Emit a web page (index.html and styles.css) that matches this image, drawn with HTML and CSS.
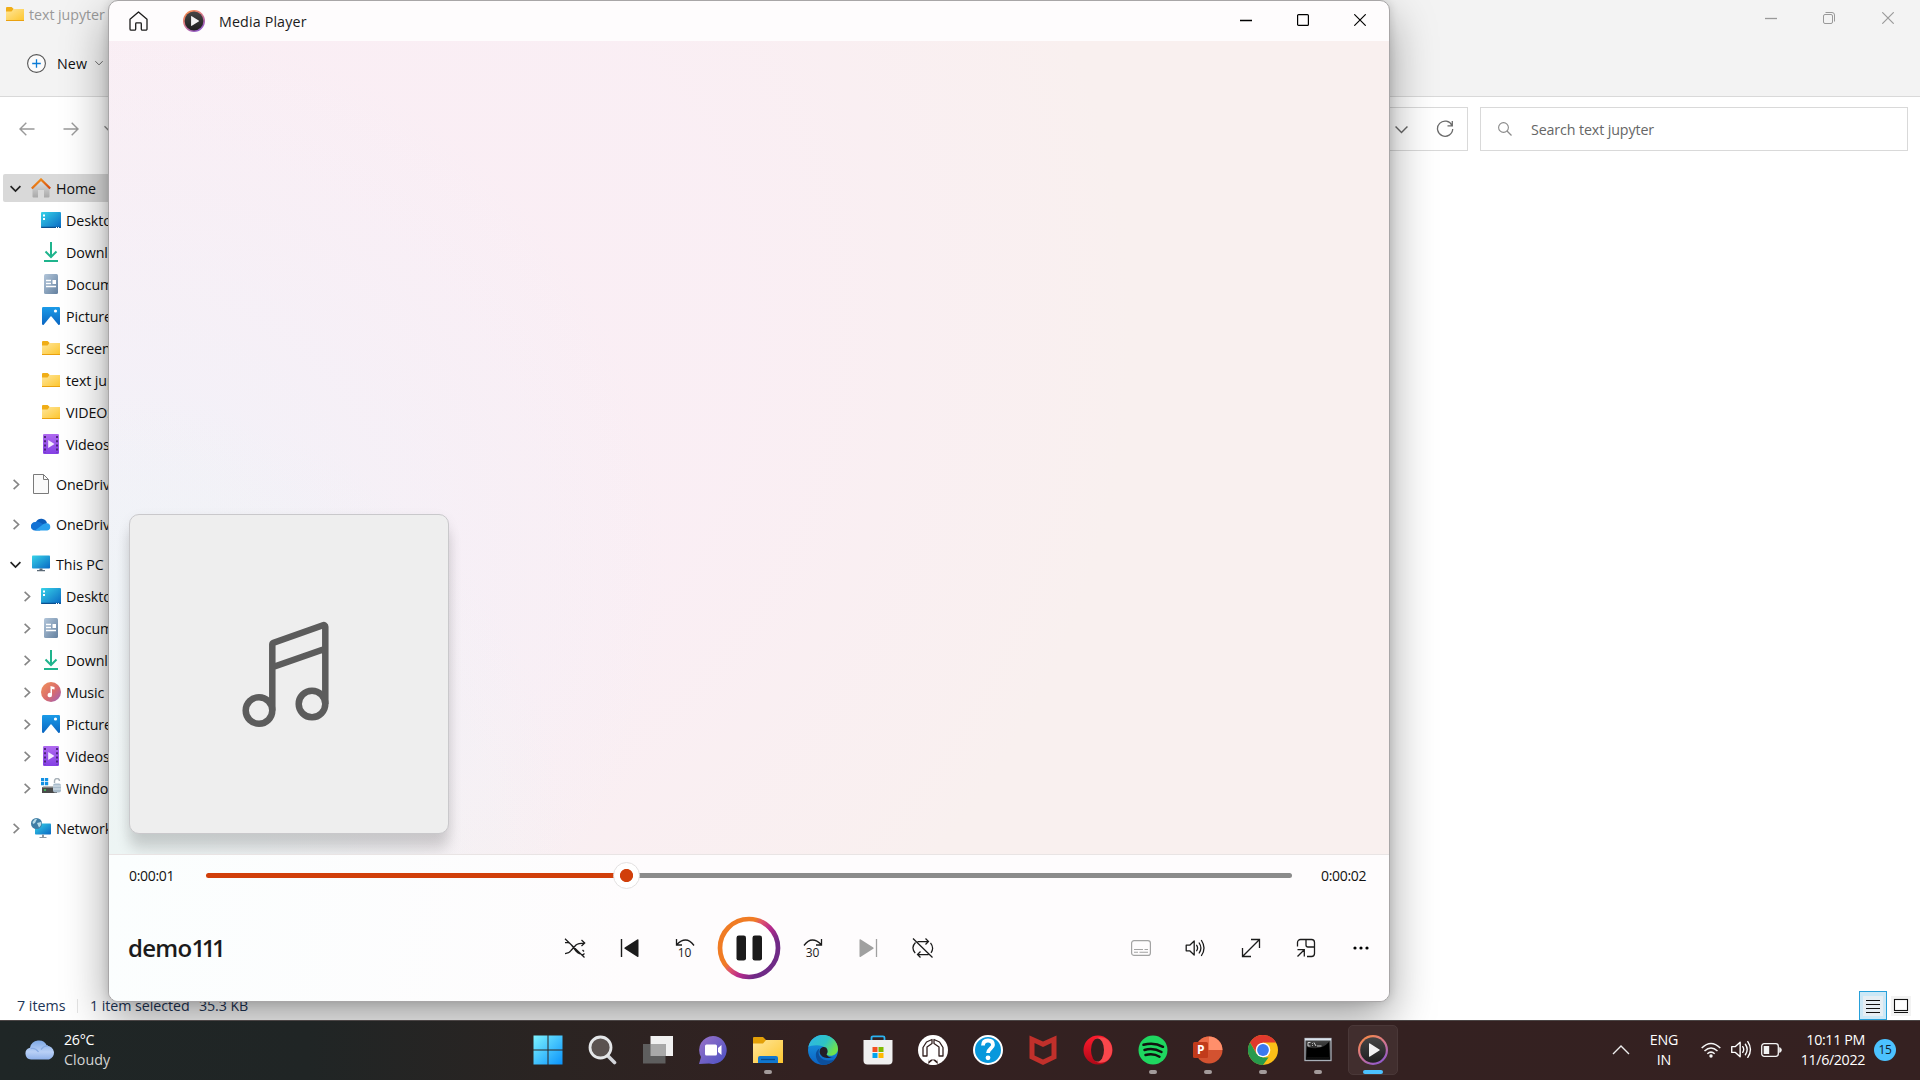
FILE: index.html
```html
<!DOCTYPE html>
<html lang="en">
<head>
<meta charset="utf-8">
<title>Media Player</title>
<link rel="stylesheet" href="styles.css">
</head>
<body>
<svg class="defs" width="0" height="0" aria-hidden="true">
  <defs>
    <linearGradient id="gFolder" x1="0" y1="0" x2="1" y2="1"><stop offset="0" stop-color="#ffe69a"/><stop offset="1" stop-color="#fdc62f"/></linearGradient>
    <linearGradient id="gBlue" x1="0" y1="0" x2="1" y2="1"><stop offset="0" stop-color="#37d3e8"/><stop offset="1" stop-color="#0a68c4"/></linearGradient>
    <linearGradient id="gPic" x1="0" y1="0" x2="0" y2="1"><stop offset="0" stop-color="#1b9be8"/><stop offset="1" stop-color="#0a66c2"/></linearGradient>
    <linearGradient id="gDoc" x1="0" y1="0" x2="1" y2="1"><stop offset="0" stop-color="#b3c6da"/><stop offset="1" stop-color="#63809f"/></linearGradient>
    <linearGradient id="gVideo" x1="0" y1="0" x2="0" y2="1"><stop offset="0" stop-color="#b06af0"/><stop offset="1" stop-color="#8440e4"/></linearGradient>
    <linearGradient id="gMusic" x1="0" y1="0" x2="1" y2="1"><stop offset="0" stop-color="#f2935a"/><stop offset=".55" stop-color="#d96c6c"/><stop offset="1" stop-color="#9b5fc0"/></linearGradient>
    <linearGradient id="gHouse" x1="0" y1="0" x2="0" y2="1"><stop offset="0" stop-color="#e4e4e4"/><stop offset="1" stop-color="#a9a9a9"/></linearGradient>
    <linearGradient id="gRoof" x1="0" y1="0" x2="1" y2="1"><stop offset="0" stop-color="#f59a1c"/><stop offset="1" stop-color="#d3470f"/></linearGradient>
    <linearGradient id="gRing" x1=".1" y1="0" x2=".7" y2="1"><stop offset="0" stop-color="#f98b3c"/><stop offset=".45" stop-color="#dc7a86"/><stop offset="1" stop-color="#8e58cf"/></linearGradient>
    <linearGradient id="gDark" x1="0" y1="0" x2="0" y2="1"><stop offset="0" stop-color="#454545"/><stop offset="1" stop-color="#1f1f1f"/></linearGradient>
    <linearGradient id="gPlayRing" x1=".12" y1=".25" x2=".88" y2=".75"><stop offset=".3" stop-color="#f07c24"/><stop offset=".42" stop-color="#e0566a"/><stop offset=".62" stop-color="#b92a8c"/><stop offset=".88" stop-color="#6f2a86"/></linearGradient>
    <linearGradient id="gWin" x1="0" y1="0" x2="1" y2="1"><stop offset="0" stop-color="#7df3ff"/><stop offset="1" stop-color="#0a93fb"/></linearGradient>
    <linearGradient id="gChat" x1="0" y1="0" x2="1" y2="1"><stop offset="0" stop-color="#9a73c8"/><stop offset="1" stop-color="#4a50c4"/></linearGradient>
    <linearGradient id="gEdge" x1="0" y1="0" x2="1" y2=".5"><stop offset="0" stop-color="#2fb4ea"/><stop offset=".6" stop-color="#2ec4c4"/><stop offset="1" stop-color="#6ee24e"/></linearGradient>
    <linearGradient id="gEdge2" x1="0" y1="0" x2="0" y2="1"><stop offset="0" stop-color="#1b9de2"/><stop offset="1" stop-color="#0b62c4"/></linearGradient>
    <linearGradient id="gOpera" x1="0" y1="0" x2="0" y2="1"><stop offset="0" stop-color="#ff1b2d"/><stop offset="1" stop-color="#b00817"/></linearGradient>
    <linearGradient id="gCloud" x1="0" y1="0" x2="0" y2="1"><stop offset="0" stop-color="#7ea9e6"/><stop offset=".6" stop-color="#b9d0f6"/><stop offset="1" stop-color="#8fb1ea"/></linearGradient>
    <linearGradient id="gCmd" x1="0" y1="0" x2="0" y2="1"><stop offset="0" stop-color="#4a4a4a"/><stop offset="1" stop-color="#050505"/></linearGradient>

    <symbol id="folder" viewBox="0 0 20 20"><path d="M1 5.2V4a1 1 0 0 1 1-1h4.600l1.900 1.800V8H1z" fill="#f0ad16"/><path d="M1 7.500h5.500L8.500 5H19v11.500H1z" fill="url(#gFolder)"/><path d="M1 16h18v1H1z" fill="#eaa10f"/></symbol>
    <symbol id="desktop" viewBox="0 0 20 20"><rect y="2" width="20" height="16" rx="1" fill="url(#gBlue)"/><path d="M0 16.700h20V17a1 1 0 0 1-1 1H1a1 1 0 0 1-1-1z" fill="#0b4f8f"/><path d="M2 4.500h2v2H2zM2 8h2v2H2zM15 17h1v1h-1zM17 17h1v1h-1z" fill="#fff"/></symbol>
    <symbol id="downloads" viewBox="0 0 20 20"><path d="M10 0v15M4.500 9.500 10 15l5.500-5.500M3 19h14" fill="none" stroke="#1fb48d" stroke-width="2"/></symbol>
    <symbol id="documents" viewBox="0 0 20 20"><rect x="3" width="14" height="20" rx="1.500" fill="url(#gDoc)"/><path d="M5 6.500h5M5 9.500h5M5 12.500h10" stroke="#fff" stroke-width="1.400"/><path d="M11.500 6h3.500v4h-3.500z" fill="#fff"/></symbol>
    <symbol id="pictures" viewBox="0 0 20 20"><rect x="1" y="1" width="18" height="18" rx="1.200" fill="url(#gPic)"/><path d="m2.500 19 7-8.500q.5-.5 1 0l7 8.500z" fill="#fff"/><circle cx="14.500" cy="5" r="1.600" fill="#fff"/></symbol>
    <symbol id="videos" viewBox="0 0 20 20"><rect x="2" width="16" height="20" rx="1.300" fill="url(#gVideo)"/><path d="M4 2v17M16 2v17" stroke="#43206f" stroke-width="1.800" stroke-dasharray="2 2.200"/><path d="M7.200 6v8l6.300-4z" fill="#f3eaff"/></symbol>
    <symbol id="music" viewBox="0 0 20 20"><circle cx="10" cy="10" r="10" fill="url(#gMusic)"/><path d="M9.500 4 13.500 5v2.500l-2.500-.6v6a2.200 2.200 0 1 1-1.500-2z" fill="#fff"/></symbol>
    <symbol id="page" viewBox="0 0 20 20"><path d="M2.500.5h10l5 5v14h-15z" fill="#fafafa" stroke="#7a7a7a"/><path d="M12.500.5v5h5" fill="none" stroke="#7a7a7a"/></symbol>
    <symbol id="onedrive" viewBox="0 0 20 20"><path d="M5 8a6 6 0 0 1 11 1l-5 5-8-3z" fill="#0b5dbb"/><path d="M4.200 8C6.500 6.500 9 8 13 11l-4 5.500H4A4.200 4.200 0 0 1 4.200 8z" fill="#1272d4"/><path d="M4 16.500 12.500 10A5 5 0 0 1 16 9.200a3.700 3.700 0 0 1 .3 7.300z" fill="#29a0ee"/></symbol>
    <symbol id="pc" viewBox="0 0 20 20"><rect x="1" y="1.500" width="18" height="13" rx=".8" fill="url(#gBlue)"/><path d="M8.500 14.500h3V16h-3zM6 16h8v1.200H6z" fill="#5d6b78"/></symbol>
    <symbol id="drive" viewBox="0 0 20 20"><path d="M0 0h3.200v3.200H0zM4 0h3.200v3.200H4zM0 4h3.200v3.200H0zM4 4h3.200v3.200H4z" fill="#1391e4"/><path d="M1 9h15v6H1z" fill="#4a4a4a"/><path d="M2.500 8h12L16 9.500H1z" fill="#bcbcbc"/><circle cx="4" cy="12" r="1" fill="#41d35c"/><path d="M13.500 5V3a2.500 2.500 0 0 1 5 0" fill="none" stroke="#a8b1b8" stroke-width="1.400"/><rect x="12" y="5.500" width="8" height="9" rx="2" fill="#a9bccb"/><path d="M12 8h8M12 11h8" stroke="#dce5ec"/></symbol>
    <symbol id="network" viewBox="0 0 20 20"><rect x="4" y="5.500" width="16" height="11" rx=".8" fill="url(#gBlue)"/><path d="M11 16.500h2V19h-2zM8.500 19h7v1h-7z" fill="#8c98a3"/><circle cx="5.500" cy="5.500" r="5.500" fill="#3f7da5"/><path d="M1.500 4Q4 0 6 1L4 5 2 6zM6 5l4-1q1 3-2 5.500z" fill="#b8dbe8"/></symbol>
    <symbol id="home" viewBox="0 0 20 20"><path d="M1.500 8 10 1l8.500 7v10.500a1 1 0 0 1-1 1H13V12H7v7.500H2.500a1 1 0 0 1-1-1z" fill="url(#gHouse)"/><path d="m.8 10.500 9.200-9 9.200 9" fill="none" stroke="url(#gRoof)" stroke-width="2.300"/></symbol>
    <symbol id="right" viewBox="0 0 10 10"><path d="M3.300.8 7.800 5 3.300 9.200" fill="none" stroke="#858585" stroke-width="1.500"/></symbol>
    <symbol id="down" viewBox="0 0 10 10"><path d="M.5 2.800 5 7.300l4.500-4.500" fill="none" stroke="#222" stroke-width="1.600"/></symbol>
    <symbol id="thin-down" viewBox="0 0 12 12"><path d="m.5 3.300 5.500 5.500 5.500-5.500" fill="none" stroke="currentColor" stroke-width="1.300"/></symbol>
    <symbol id="min" viewBox="0 0 12 12"><path d="M0 6.500h12" stroke="currentColor" stroke-width="1.300"/></symbol>
    <symbol id="max" viewBox="0 0 12 12"><rect x=".6" y=".6" width="10.800" height="10.800" rx="1" fill="none" stroke="currentColor" stroke-width="1.200"/></symbol>
    <symbol id="restore" viewBox="0 0 12 12"><rect x=".5" y="2.500" width="9" height="9" rx="1.500" fill="none" stroke="currentColor"/><path d="M2.500.5H9A2.500 2.500 0 0 1 11.500 3v6.500" fill="none" stroke="currentColor"/></symbol>
    <symbol id="close" viewBox="0 0 12 12"><path d="m.3.300 11.400 11.400M11.700.300.300 11.700" stroke="currentColor" stroke-width="1.150"/></symbol>
    <symbol id="player" viewBox="0 0 30 30"><circle cx="15" cy="15" r="15" fill="url(#gRing)"/><circle cx="15" cy="15" r="12.800" fill="url(#gDark)"/><path d="M11 8.800v12.400a.6.600 0 0 0 1 .4l9.400-6a.7.700 0 0 0 0-1.200L12 8.400a.6.600 0 0 0-1 .4z" fill="#f2f2f2"/></symbol>
    <symbol id="speaker" viewBox="0 0 20 18"><path d="M.7 6.200h3.500L8.700 2v14l-4.500-4.200H.7zM11.200 6.300q1.800 2.700 0 5.400M13.700 4q3.400 5 0 10M16 1.500q5 7.500 0 15" fill="none" stroke="currentColor" stroke-width="1.300" stroke-linejoin="round" stroke-linecap="round"/></symbol>
  </defs>
</svg>

<div class="screen">
  <section class="explorer">
    <header class="ex-top">
      <div class="ex-title">
        <svg class="i20"><use href="#folder"/></svg>
        <span class="ex-name">text jupyter</span>
        <div class="ex-buttons">
          <span><svg class="i12"><use href="#min"/></svg></span>
          <span><svg class="i12"><use href="#restore"/></svg></span>
          <span><svg class="i12"><use href="#close"/></svg></span>
        </div>
      </div>
      <div class="ex-commands">
        <svg width="19" height="19" viewBox="0 0 19 19"><circle cx="9.500" cy="9.500" r="8.900" fill="#fbfbfb" stroke="#555" stroke-width="1.100"/><path d="M9.500 5.200v8.600M5.200 9.500h8.600" stroke="#0a7bd6" stroke-width="1.300"/></svg>
        <span class="new">New</span>
        <svg class="new-chev"><use href="#thin-down"/></svg>
      </div>
    </header>
    <div class="ex-nav">
      <div class="history">
        <svg width="16" height="14" viewBox="0 0 16 14"><path d="M15.500 7H1M7.300.7 1 7l6.300 6.300" fill="none" stroke="#999" stroke-width="1.400"/></svg>
        <svg width="16" height="14" viewBox="0 0 16 14"><path d="M.5 7H15M8.700.7 15 7l-6.300 6.300" fill="none" stroke="#999" stroke-width="1.400"/></svg>
        <svg class="i12 recent"><use href="#thin-down"/></svg>
      </div>
      <div class="address">
        <svg class="addr-chev"><use href="#thin-down"/></svg>
        <svg width="18" height="18" viewBox="0 0 18 18"><path d="M16 5.500A7.600 7.600 0 1 0 16.700 9M16.300 1v4.800h-4.800" fill="none" stroke="#6a6a6a" stroke-width="1.300"/></svg>
      </div>
      <div class="search">
        <svg width="14" height="14" viewBox="0 0 14 14"><circle cx="5.500" cy="5.500" r="4.900" fill="none" stroke="#8a8a8a" stroke-width="1.100"/><path d="m9 9 4.500 4.500" stroke="#8a8a8a" stroke-width="1.200"/></svg>
        <span>Search text jupyter</span>
      </div>
    </div>
    <nav class="tree">
      <ul>
        <li class="selected"><svg class="chev"><use href="#down"/></svg><svg class="i20"><use href="#home"/></svg><span>Home</span></li>
        <li class="sub"><i class="chev"></i><svg class="i20"><use href="#desktop"/></svg><span>Desktop</span></li>
        <li class="sub"><i class="chev"></i><svg class="i20"><use href="#downloads"/></svg><span>Downloads</span></li>
        <li class="sub"><i class="chev"></i><svg class="i20"><use href="#documents"/></svg><span>Documents</span></li>
        <li class="sub"><i class="chev"></i><svg class="i20"><use href="#pictures"/></svg><span>Pictures</span></li>
        <li class="sub"><i class="chev"></i><svg class="i20"><use href="#folder"/></svg><span>Screenshots</span></li>
        <li class="sub"><i class="chev"></i><svg class="i20"><use href="#folder"/></svg><span>text jupyter</span></li>
        <li class="sub"><i class="chev"></i><svg class="i20"><use href="#folder"/></svg><span>VIDEOS</span></li>
        <li class="sub"><i class="chev"></i><svg class="i20"><use href="#videos"/></svg><span>Videos</span></li>
      </ul>
      <ul><li><svg class="chev"><use href="#right"/></svg><svg class="i20"><use href="#page"/></svg><span>OneDrive</span></li></ul>
      <ul><li><svg class="chev"><use href="#right"/></svg><svg class="i20"><use href="#onedrive"/></svg><span>OneDrive</span></li></ul>
      <ul>
        <li><svg class="chev"><use href="#down"/></svg><svg class="i20"><use href="#pc"/></svg><span>This PC</span></li>
        <li class="sub"><svg class="chev"><use href="#right"/></svg><svg class="i20"><use href="#desktop"/></svg><span>Desktop</span></li>
        <li class="sub"><svg class="chev"><use href="#right"/></svg><svg class="i20"><use href="#documents"/></svg><span>Documents</span></li>
        <li class="sub"><svg class="chev"><use href="#right"/></svg><svg class="i20"><use href="#downloads"/></svg><span>Downloads</span></li>
        <li class="sub"><svg class="chev"><use href="#right"/></svg><svg class="i20"><use href="#music"/></svg><span>Music</span></li>
        <li class="sub"><svg class="chev"><use href="#right"/></svg><svg class="i20"><use href="#pictures"/></svg><span>Pictures</span></li>
        <li class="sub"><svg class="chev"><use href="#right"/></svg><svg class="i20"><use href="#videos"/></svg><span>Videos</span></li>
        <li class="sub"><svg class="chev"><use href="#right"/></svg><svg class="i20"><use href="#drive"/></svg><span>Windows</span></li>
      </ul>
      <ul><li><svg class="chev"><use href="#right"/></svg><svg class="i20"><use href="#network"/></svg><span>Network</span></li></ul>
    </nav>
    <footer class="status">
      <span class="count">7 items</span>
      <span class="picked">1 item selected</span>
      <span class="bytes">35.3 KB</span>
      <div class="views">
        <span class="view-on"><svg width="20" height="20" viewBox="0 0 20 20"><rect width="20" height="20" fill="#e6eef3"/><path d="M3 4.500h14M3 8.500h14M3 12.500h14M3 16.500h14" stroke="#111" stroke-width="1.100"/></svg></span>
        <svg width="20" height="20" viewBox="0 0 20 20"><rect width="20" height="20" fill="#f3f3f3"/><rect x="3.500" y="3.500" width="13" height="11" fill="#fff" stroke="#111" stroke-width="1.100"/><path d="M3 16.500h14" stroke="#111"/></svg>
      </div>
    </footer>
  </section>

  <section class="media">
    <header class="m-title">
      <svg class="m-home" width="19" height="20" viewBox="0 0 19 20"><path d="M1 8.300 9.500 1 18 8.300V18a1.200 1.200 0 0 1-1.200 1.200h-3.300A1.200 1.200 0 0 1 12.300 18v-5.300a.8.800 0 0 0-.8-.8h-4a.8.800 0 0 0-.8.800V18a1.200 1.200 0 0 1-1.200 1.200H2.200A1.200 1.200 0 0 1 1 18z" fill="none" stroke="#1b1b1b" stroke-width="1.300" stroke-linejoin="round"/></svg>
      <svg class="m-logo"><use href="#player"/></svg>
      <span>Media Player</span>
      <div class="m-buttons">
        <span><svg class="i12"><use href="#min"/></svg></span>
        <span><svg class="i12"><use href="#max"/></svg></span>
        <span><svg class="i12"><use href="#close"/></svg></span>
      </div>
    </header>
    <main class="stage">
      <div class="cover">
        <svg viewBox="0 0 318 318"><g fill="none" stroke="#5c5c5c" stroke-width="6.500" stroke-linejoin="round"><circle cx="129" cy="195.500" r="13.300"/><circle cx="182" cy="189" r="13.300"/><path d="M142.300 195.500V129.500a2 2 0 0 1 1.300-1.800L193 110.200a1.700 1.700 0 0 1 2.300 1.600V189M142.300 152.300l53-18.500"/></g></svg>
      </div>
    </main>
    <footer class="controls">
      <div class="seek">
        <span class="t-now">0:00:01</span>
        <div class="track"><div class="fill" style="width:419px"></div><div class="thumb"></div><div class="rest"></div></div>
        <span class="t-end">0:00:02</span>
      </div>
      <div class="bar">
        <div class="song">demo<span>111</span></div>
        <div class="transport">
          <span><svg width="22" height="20" viewBox="0 0 22 20"><path d="M1 4.500h2.500q2.500.5 4 2.500l4.500 6q1.500 2 4 2.800M1 15.500q4 0 6-3l5-5.500q2-2 8.500-2M17.500 2l3.200 3-3.200 3M18 17.800l2.500-2.300M18.500 12l1.500 1.500M1 .8l19.500 18.700" fill="none" stroke="#1b1b1b" stroke-width="1.250"/></svg></span>
          <span><svg width="20" height="20" viewBox="0 0 20 20"><path d="M1.500 1v18" stroke="#1b1b1b" stroke-width="1.400"/><path d="M18.500 2v16.200a.8.800 0 0 1-1.300.600L4.700 10.700a.8.800 0 0 1 0-1.300L17.200 1.400a.8.800 0 0 1 1.300.6z" fill="#1b1b1b"/></svg></span>
          <span class="jump"><svg width="20" height="8" viewBox="0 0 20 8"><path d="M1.500 1v6h5.500M1.800 6.500Q6 2 10.500 2t8.500 5.500" fill="none" stroke="#1b1b1b" stroke-width="1.300"/></svg><b>10</b></span>
          <span class="play"><svg width="64" height="64" viewBox="0 0 64 64"><circle cx="32" cy="32" r="29" fill="#fff" stroke="url(#gPlayRing)" stroke-width="4.700"/><rect x="19.500" y="19.500" width="9.500" height="25" rx="2.300" fill="#1b1b1b"/><rect x="35.500" y="19.500" width="9.500" height="25" rx="2.300" fill="#1b1b1b"/></svg></span>
          <span class="jump"><svg width="20" height="8" viewBox="0 0 20 8"><path d="M18.500 1v6H13M18.200 6.500Q14 2 9.500 2T1 7.500" fill="none" stroke="#1b1b1b" stroke-width="1.300"/></svg><b>30</b></span>
          <span><svg width="20" height="20" viewBox="0 0 20 20"><path d="M18.500 1v18" stroke="#a0a0a0" stroke-width="1.300"/><path d="M1.500 2v16.200a.8.800 0 0 0 1.300.600l12.500-8.100a.8.800 0 0 0 0-1.300L2.800 1.400A.8.800 0 0 0 1.500 2z" fill="#a0a0a0"/></svg></span>
          <span><svg width="22" height="20" viewBox="0 0 22 20"><path d="M5.500 3.500h11M13.500.5l3 3-3 3M16.500 16.500h-11M8.500 13.500l-3 3 3 3M3.500 4.500Q-1.500 9.500 3.200 15.200M18.500 4.800q4 5.200.5 10M1 .5l19.500 19" fill="none" stroke="#1b1b1b" stroke-width="1.250"/></svg></span>
        </div>
        <div class="extras">
          <span><svg width="20" height="16" viewBox="0 0 20 16"><rect x=".6" y=".6" width="18.800" height="14.800" rx="2.500" fill="none" stroke="#a3a3a3" stroke-width="1.200"/><path d="M3 9.500h9M13.500 9.500H17M3 12.300h4M8.500 12.300H17" stroke="#a3a3a3" stroke-width="1.100"/></svg></span>
          <span><svg width="21" height="18"><use href="#speaker"/></svg></span>
          <span><svg width="20" height="20" viewBox="0 0 20 20"><path d="m1.500 18.500 17-17M10 1.500h8.500V10M1.500 10v8.500H10" fill="none" stroke="#1b1b1b" stroke-width="1.300"/></svg></span>
          <span><svg width="20" height="20" viewBox="0 0 20 20"><path d="M1.500 8.500V4.500a3 3 0 0 1 3-3h11a3 3 0 0 1 3 3v11a3 3 0 0 1-3 3H11M10 1.500v5.500a2 2 0 0 0 2 2h6.500M1.500 18.500l6.500-6.500M1.500 11.700H8.300v6.800" fill="none" stroke="#1b1b1b" stroke-width="1.300"/></svg></span>
          <span><svg width="18" height="6" viewBox="0 0 18 6"><circle cx="3" cy="3" r="1.600"/><circle cx="9" cy="3" r="1.600"/><circle cx="15" cy="3" r="1.600"/></svg></span>
        </div>
      </div>
    </footer>
  </section>

  <footer class="taskbar">
    <div class="weather">
      <svg width="32" height="20" viewBox="0 0 32 20"><path d="M7 19.500a6 6 0 0 1-1-11.800 9 9 0 0 1 17-1.900A7 7 0 0 1 25 19.500z" fill="url(#gCloud)"/><path d="M6.500 8.500q5-1 8 3.500M17 9.500q3-4 7-3.500" fill="none" stroke="#86aae3" stroke-width="1.300"/></svg>
      <div><b>26°C</b><small>Cloudy</small></div>
    </div>
    <div class="apps">
      <span><svg viewBox="0 0 30 30"><path d="M.5.5h14v14H.5zM15.500.5h14v14h-14zM.5 15.500h14v14H.5zM15.500 15.500h14v14h-14z" fill="url(#gWin)"/></svg></span>
      <span><svg viewBox="0 0 30 30"><path d="m19.500 20.500 7 7" stroke="#d3d5da" stroke-width="3.600" stroke-linecap="round"/><circle cx="12.500" cy="12.500" r="10.500" fill="#5a5250" stroke="#e4e6e8" stroke-width="2.800"/></svg></span>
      <span><svg viewBox="0 0 30 30"><path d="M7.500 1h22.500v20H7.500z" fill="#f1f1f1"/><path d="M0 9h22.500v19.500H0z" fill="#5e5e5e"/><path d="M7.500 9h15v12h-15z" fill="#a9a9a9"/></svg></span>
      <span><svg viewBox="0 0 30 30"><path d="M15 1a14 14 0 1 1-4 27.500L1 29l2-7A14 14 0 0 1 15 1z" fill="url(#gChat)"/><rect x="7" y="9.500" width="12" height="11" rx="1.500" fill="#fff"/><path d="m20 13 3.500-3v10L20 17z" fill="#fff"/></svg></span>
      <span><svg viewBox="0 0 30 30"><path d="M0 3a1 1 0 0 1 1-1h9l3 3v4H0z" fill="#e3a008"/><path d="M0 8.500h10L13 5h17v23H0z" fill="url(#gFolder)"/><path d="M5 28v-5a2 2 0 0 1 2-2h16a2 2 0 0 1 2 2v5z" fill="#1077cf"/><path d="M8 24.500h14" stroke="#084a8a" stroke-width="1.300"/></svg><i></i></span>
      <span><svg viewBox="0 0 30 30"><circle cx="15" cy="15" r="15" fill="url(#gEdge2)"/><path d="M.3 12A15 15 0 0 1 30 14c0 6-7.500 8.500-11.500 5.500 2-2.500.5-7.500-4.500-8.500C8 9.500 2 11 .3 12z" fill="url(#gEdge)"/><path d="M11.500 13.500C8 21 15 28 26.500 24.500A15 15 0 0 1 15 30C8 28 5 17 11.500 13.500z" fill="#0c4f9c"/><path d="M18.300 12.800c-3-2.500-8 .5-6.300 5.700 2 5 9 5.500 14 3.500-3 1-6 0-7.500-2.500 1.500-2 1.600-4.500-.2-6.700z" fill="#231d26"/></svg></span>
      <span><svg viewBox="0 0 30 30"><path d="M8.500 6V2.800a1.500 1.500 0 0 1 1.500-1.500h10a1.500 1.500 0 0 1 1.500 1.500V6" fill="none" stroke="#2bb4f2" stroke-width="1.800"/><path d="M.5 5h29v20.500a4 4 0 0 1-4 4h-21a4 4 0 0 1-4-4z" fill="#f0f0f0"/><path d="M9.500 12h5v5h-5z" fill="#f25022"/><path d="M15.500 12h5v5h-5z" fill="#7fba00"/><path d="M9.500 18h5v5h-5z" fill="#00a4ef"/><path d="M15.500 18h5v5h-5z" fill="#ffb900"/></svg></span>
      <span><svg viewBox="0 0 30 30"><circle cx="15" cy="15" r="15" fill="#fff"/><path d="M8.500 21H5v-8.500L8.500 7 14 4.500v4L9 12v9zM21.500 21H25v-8.500L21.500 7 16 4.500v4l5 3.500v9z" fill="none" stroke="#32201f" stroke-width="1.300" stroke-linejoin="round"/><path d="M9.800 29v-5L15 28.200l5.200-4.200v5Q15 31 9.800 29z" fill="#fff"/><path d="M10.300 24.500V29l4.700-4 4.700 4v-4.500" fill="#32201f"/><path d="M10.300 12.800 15 9.500l4.700 3.300v14L15 22.500l-4.700 4.300z" fill="#fff"/></svg></span>
      <span><svg viewBox="0 0 30 30"><circle cx="15" cy="15" r="14" fill="#0798dc" stroke="#fff" stroke-width="2"/><path d="M10 10.500Q10 5.500 15 5.500t5 4.500c0 3-5 4-5 8" fill="none" stroke="#fff" stroke-width="3.800"/><circle cx="15" cy="22.800" r="2.400" fill="#fff"/></svg></span>
      <span><svg viewBox="0 0 30 30"><path d="m1.500.5 13.500 6 13.500-6v23L15 30 1.500 23.500zM6.500 8v12.500L15 24.600l8.500-4.100V8L15 12z" fill="#c1302b" fill-rule="evenodd"/></svg></span>
      <span><svg viewBox="0 0 30 30"><ellipse cx="15" cy="15" rx="14.500" ry="14.500" fill="url(#gOpera)"/><path d="M12 4c4-3 10-2 13.500 1.500a14 14 0 0 1 0 19C22 28 16 29 12 26z" fill="#f8474c"/><ellipse cx="14.500" cy="15" rx="6.500" ry="11.500" fill="#33201f"/></svg></span>
      <span><svg viewBox="0 0 30 30"><circle cx="15" cy="15" r="14.500" fill="#1fd760"/><path d="M5.500 9.800q10.500-3 19.500 2M6.500 15q9-2.500 17 2M7.500 20q8-2 14 1.700" fill="none" stroke="#10120f" stroke-width="2.500" stroke-linecap="round"/></svg><i></i></span>
      <span><svg viewBox="0 0 30 30"><circle cx="16" cy="15" r="13.500" fill="#d35230"/><path d="M16 1.500A13.500 13.500 0 0 1 29.500 15H16z" fill="#ff8f6b"/><path d="M16 1.500V15H2.500A13.500 13.500 0 0 1 16 1.500z" fill="#ed6c47"/><rect y="7" width="15" height="16" rx="1.500" fill="#c13b1b"/><text x="7.700" y="19.300" text-anchor="middle" class="ppt">P</text></svg><i></i></span>
      <span><svg viewBox="0 0 30 30"><circle cx="15" cy="15" r="15" fill="#fbbf17"/><path d="M2 7.500A15 15 0 0 1 28 7.500H15L9 19z" fill="#e0392d"/><path d="M2 7.500 8.500 18.700 15 22.500h5.500L15 30A15 15 0 0 1 2 7.500z" fill="#279a4c"/><circle cx="15" cy="15" r="7.300" fill="#fff"/><circle cx="15" cy="15" r="5.900" fill="#3b79ee"/></svg><i></i></span>
      <span><svg viewBox="0 0 30 30"><rect x="2" y="3.500" width="26" height="22" fill="url(#gCmd)" stroke="#a9b0b8" stroke-width="1.300"/><path d="M2 4.500h26" stroke="#dce4ee" stroke-width="2"/><path d="M4 22V12q14 4 22-5v15z" fill="#000"/><path d="M7.500 7.500H5v3.500h2.500M9.500 8v.8M9.500 10v.8M11 7.500l2 3.500M14 11h4.500" fill="none" stroke="#ddd" stroke-width=".9"/></svg><i></i></span>
      <span class="active"><svg viewBox="0 0 30 30"><use href="#player"/></svg><i></i></span>
    </div>
    <div class="tray">
      <svg class="up" width="18" height="10" viewBox="0 0 18 10"><path d="m1 9 8-8 8 8" fill="none" stroke="#eee" stroke-width="1.400"/></svg>
      <div class="lang">ENG<br>IN</div>
      <svg class="wifi" width="20" height="16" viewBox="0 0 20 16"><path d="M.7 6Q10-3 19.300 6M3.500 9Q10 3 16.500 9M6.300 11.800q3.700-3.300 7.400 0" fill="none" stroke="#f4f4f4" stroke-width="1.500"/><circle cx="10" cy="14" r="1.700" fill="#f4f4f4"/></svg>
      <svg class="vol" width="21" height="19"><use href="#speaker"/></svg>
      <svg class="bat" width="21" height="14" viewBox="0 0 21 14"><rect x=".7" y=".7" width="16.600" height="12.600" rx="2.500" fill="none" stroke="#f4f4f4" stroke-width="1.300"/><rect x="2.700" y="3" width="5.500" height="8" fill="#f4f4f4"/><path d="M18.500 4.500q2 .5 2 2.500t-2 2.500z" fill="#f4f4f4" stroke="#f4f4f4" stroke-width=".6"/></svg>
      <div class="clock"><span>10:11 PM</span><span>11/6/2022</span></div>
      <div class="badge">15</div>
    </div>
  </footer>
</div>
</body>
</html>
```

FILE: styles.css
```css
* { box-sizing: border-box; }
body { margin: 0; font: 14.25px/20px "Open Sans", "Noto Sans", sans-serif; color: #111; overflow: hidden; }
ul { list-style: none; margin: 0; padding: 0; }
svg { display: block; flex: none; }
.defs { position: absolute; }
.screen { position: relative; width: 1920px; height: 1080px; display: flex; flex-direction: column; overflow: hidden; }
.i20 { width: 20px; height: 20px; }
.i12 { width: 12px; height: 12px; }

/* File Explorer */
.explorer { height: 1020px; display: flex; flex-direction: column; background: #fff; }
.ex-top { height: 97px; background: #f3f3f3; border-bottom: 1px solid #d9d9d9; }
.ex-title { height: 36px; display: flex; align-items: flex-start; padding: 4px 3px 0 5px; color: #999; }
.ex-name { margin: 1px 0 0 4px; letter-spacing: -.05px; }
.ex-buttons { margin-left: auto; display: flex; }
.ex-buttons span { width: 58.500px; height: 28px; display: grid; place-items: center; }
.ex-commands { display: flex; align-items: center; padding-left: 27px; height: 54px; }
.new { margin-left: 11px; width: 30px; padding-top: 1px; letter-spacing: .1px; }
.new-chev { width: 8px; height: 8px; margin-left: 8px; color: #555; }
.ex-nav { height: 75px; display: flex; align-items: flex-start; padding: 10px 12px 0 19px; }
.history { height: 44px; display: flex; align-items: center; gap: 28px; flex: 1; color: #888; }
.recent { margin-left: -3px; }
.address, .search { height: 44px; border: 1px solid #d9d9d9; display: flex; align-items: center; }
.address { width: 400px; justify-content: flex-end; gap: 28px; padding-right: 13px; margin-right: 12px; color: #666; }
.addr-chev { width: 13px; height: 13px; }
.search { width: 428px; padding-left: 17px; gap: 19px; color: #666; }
.search span { padding-top: 1px; letter-spacing: -.12px; }
.tree { width: 300px; flex: 1; display: flex; flex-direction: column; gap: 8px; }
.tree li { height: 32px; display: flex; align-items: center; padding-left: 10px; white-space: nowrap; letter-spacing: -.1px; }
.tree li.sub { padding-left: 21px; }
.tree .chev { width: 11px; height: 11px; margin-right: 10px; flex: none; }
.tree .sub .chev { margin-right: 9px; }
.tree .i20 { margin-right: 5px; }
.tree span { padding-top: 1px; }
.tree li.selected { height: 28px; margin: 2px 0 2px 3px; padding-left: 7px; background: #d9d9d9; border-radius: 2px; }
.status { height: 29px; display: flex; align-items: center; padding-left: 17px; color: #1d3557; }
.status .count { width: 61px; border-right: 1px solid #e5e5e5; line-height: 14px; }
.status .picked { width: 108px; padding-left: 12px; white-space: nowrap; letter-spacing: -.05px; }
.status .bytes { width: 73px; padding-left: 13px; letter-spacing: -.1px; }
.views { margin-left: auto; display: flex; align-items: center; padding-right: 9px; gap: 4px; }
.view-on { width: 28px; height: 29px; border: 1px solid #26a0da; background: #cce8f6; display: grid; place-items: center; }

/* Media Player window */
.media { position: absolute; left: 108px; top: 0; width: 1282px; height: 1002px; border: 1px solid #a8a6a7; border-radius: 10px; overflow: hidden; display: flex; flex-direction: column; background: #fefcfd; box-shadow: 0 18px 46px rgba(0,0,0,.38), 0 0 10px rgba(0,0,0,.14); }
.m-title { height: 40px; display: flex; align-items: center; padding-left: 20px; color: #1b1b1b; }
.m-logo { width: 22px; height: 22px; margin: 0 14px 0 35px; }
.m-title > span { padding-top: 1px; letter-spacing: .15px; }
.m-buttons { margin-left: auto; padding-right: 1px; display: flex; color: #000; }
.m-buttons span { width: 57px; height: 40px; padding-bottom: 2px; display: grid; place-items: center; }
.stage { height: 813px; display: flex; align-items: flex-end; padding: 0 0 20px 20px; background:
  radial-gradient(circle 460px at 0 100%, #edf5f4, rgba(237,245,244,0)),
  radial-gradient(circle 560px at 0 66%, #f1f2f9, rgba(241,242,249,0)),
  radial-gradient(circle 800px at 18% 36%, #faeef5, rgba(250,238,245,.85) 50%, rgba(250,238,245,0)), #f9f0ef; }
.cover { width: 320px; height: 320px; border: 1px solid #c9c8cb; border-radius: 10px; background: #eee; box-shadow: 0 16px 14px rgba(0,0,0,.14), 0 4px 14px rgba(0,0,0,.06); }
.controls { flex: 1; border-top: 1px solid #e9e4e4; background: linear-gradient(100deg, #fbfefe, #fefcfd 42%); }
.seek { height: 41px; display: flex; align-items: center; padding-left: 20px; }
.t-now, .t-end { font-size: 14px; letter-spacing: -.3px; }
.t-now { width: 77px; }
.track { width: 1086px; display: flex; align-items: center; }
.fill, .rest { height: 5px; }
.fill { background: #d13f0a; border-radius: 3px 0 0 3px; margin-right: -12px; }
.rest { background: #8b8b8b; flex: 1; margin-left: -2px; border-radius: 0 3px 3px 0; }
.thumb { width: 27px; height: 27px; border-radius: 50%; background: radial-gradient(circle, #d13f0a 6.200px, #fff 6.900px) border-box; border: 1px solid #e3e1e1; z-index: 1; }
.t-end { margin-left: 29px; }
.bar { display: grid; grid-template-columns: 1fr auto 1fr; align-items: center; height: 104px; padding-right: 1px; }
.song { padding-left: 19px; font-size: 24px; font-weight: 600; letter-spacing: -.7px; color: #1b1b1b; }
.song span { letter-spacing: -3.500px; }
.transport, .extras { display: flex; align-items: center; }
.transport > span, .extras > span { width: 55px; display: grid; place-items: center; color: #1b1b1b; }
.transport .play { width: 73px; }
.extras { justify-content: flex-end; }
.jump b { font-weight: 500; font-size: 12px; line-height: 13px; }

/* Taskbar */
.taskbar { height: 60px; position: relative; z-index: 2; display: grid; grid-template-columns: 1fr auto 1fr; align-items: center; border-top: 1px solid #4b4545; background: linear-gradient(90deg, #1f2626 0, #202525 16%, #2b2422 29%, #332121 42%, #352121 100%); color: #fff; padding-bottom: 2px; }
.weather { display: flex; align-items: center; padding-left: 24px; gap: 8px; }
.weather b, .weather small { display: block; font: inherit; letter-spacing: .1px; }
.weather b { letter-spacing: -.3px; }
.weather small { color: #d4d4d4; }
.apps { display: flex; gap: 5px; }
.apps span { width: 50px; height: 50px; display: grid; place-items: center; position: relative; border-radius: 5px; border: 1px solid transparent; }
.apps span > svg { width: 30px; height: 30px; }
.apps i { position: absolute; left: 20px; bottom: 0; width: 8px; height: 4px; border-radius: 2px; background: #a39b9b; }
.apps .active { background: #412e2e; border-color: #4a3838; }
.apps .active i { left: 14px; width: 20px; background: #4cc2ff; }
.ppt { font: bold 12px "Open Sans", sans-serif; fill: #fff; }
.tray { display: flex; align-items: center; justify-content: flex-end; padding-right: 24px; }
.lang { width: 32px; margin: 0 21px 0 18px; text-align: center; letter-spacing: -.1px; }
.wifi { margin-right: 10px; }
.vol { margin-right: 9px; }
.clock { width: 84px; text-align: right; margin-right: 8px; }
.clock span { display: block; letter-spacing: -.35px; margin-right: 1px; }
.badge { width: 22px; height: 22px; border-radius: 50%; background: #4cc2ff; color: #12222d; font-size: 12px; line-height: 21px; text-align: center; letter-spacing: -.4px; }
```
